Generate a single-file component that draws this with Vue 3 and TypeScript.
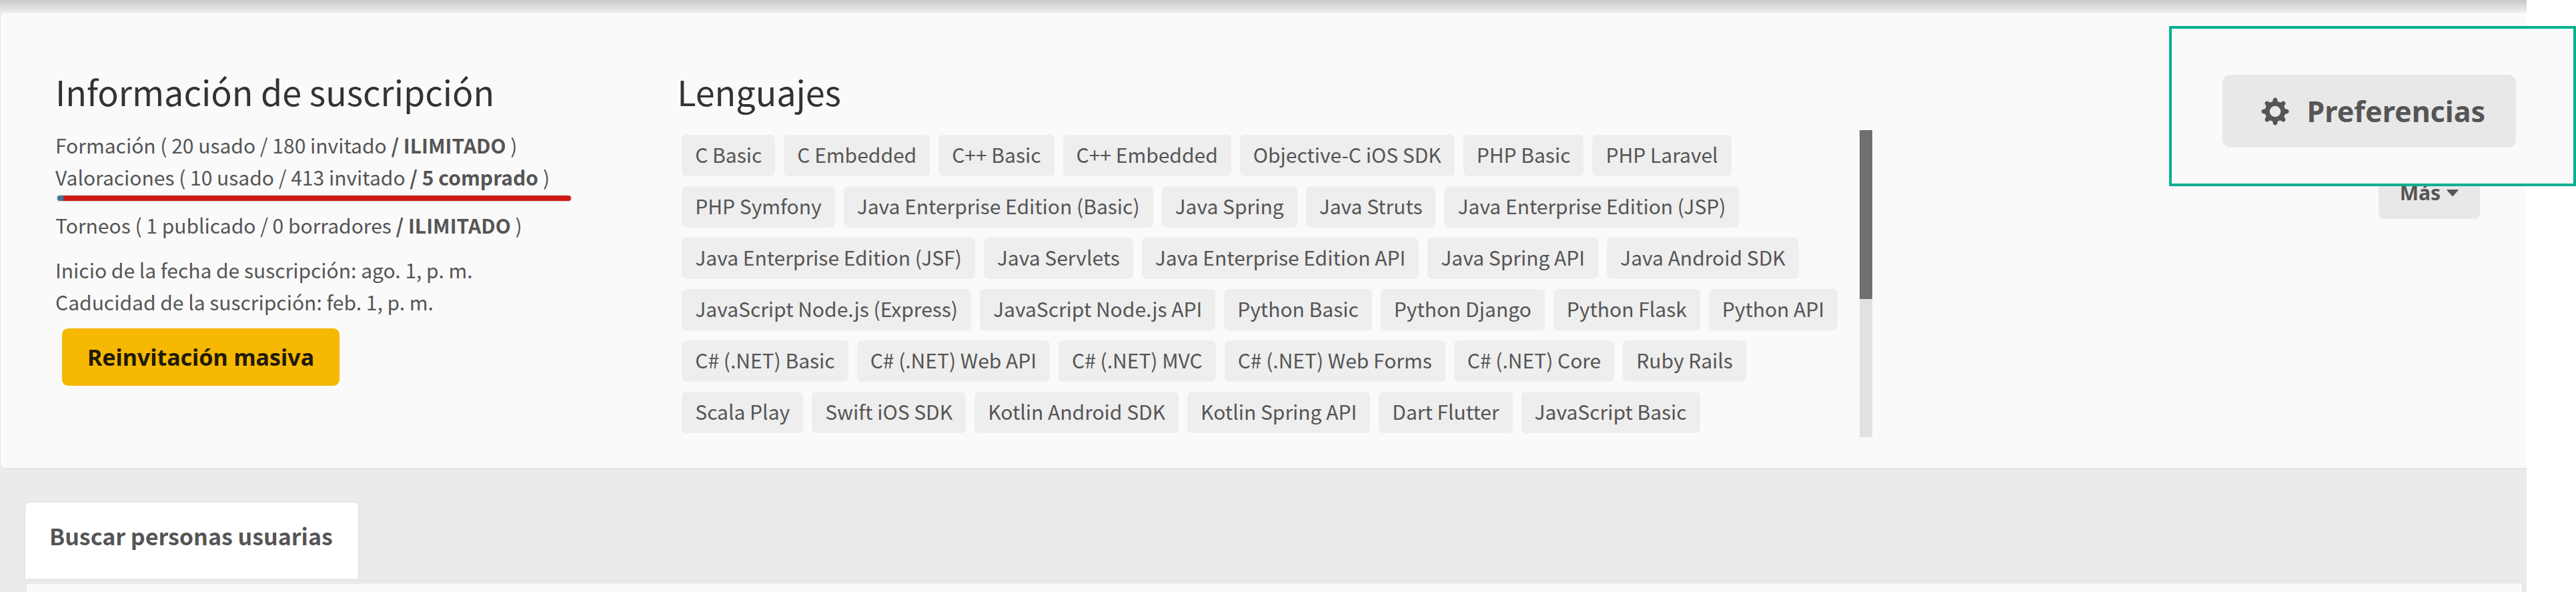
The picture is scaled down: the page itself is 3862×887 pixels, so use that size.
<script setup lang="ts">
interface Usage {
  label: string
  detail: string
  limit: string
}

const training: Usage = { label: 'Formación', detail: '20 usado / 180 invitado', limit: '/ ILIMITADO' }
const assessments: Usage = { label: 'Valoraciones', detail: '10 usado / 413 invitado', limit: '/ 5 comprado' }
const tournaments: Usage = { label: 'Torneos', detail: '1 publicado / 0 borradores', limit: '/ ILIMITADO' }

const languages: string[] = [
  'C Basic', 'C Embedded', 'C++ Basic', 'C++ Embedded', 'Objective-C iOS SDK', 'PHP Basic', 'PHP Laravel',
  'PHP Symfony', 'Java Enterprise Edition (Basic)', 'Java Spring', 'Java Struts', 'Java Enterprise Edition (JSP)',
  'Java Enterprise Edition (JSF)', 'Java Servlets', 'Java Enterprise Edition API', 'Java Spring API', 'Java Android SDK',
  'JavaScript Node.js (Express)', 'JavaScript Node.js API', 'Python Basic', 'Python Django', 'Python Flask', 'Python API',
  'C# (.NET) Basic', 'C# (.NET) Web API', 'C# (.NET) MVC', 'C# (.NET) Web Forms', 'C# (.NET) Core', 'Ruby Rails',
  'Scala Play', 'Swift iOS SDK', 'Kotlin Android SDK', 'Kotlin Spring API', 'Dart Flutter', 'JavaScript Basic',
]

const toothAngles: number[] = [0, 45, 90, 135, 180, 225, 270, 315]
</script>

<template>
  <div class="page">
    <div class="top-shadow"></div>
    <main class="panel">
      <section class="info">
        <h2>Información de suscripción</h2>
        <p>{{ training.label }} ( {{ training.detail }} <b>{{ training.limit }}</b> )</p>
        <p>{{ assessments.label }} ( {{ assessments.detail }} <b>{{ assessments.limit }}</b> )</p>
        <div class="usage-bar"><span class="usage-used"></span></div>
        <p>{{ tournaments.label }} ( {{ tournaments.detail }} <b>{{ tournaments.limit }}</b> )</p>
        <div class="dates">
          <p>Inicio de la fecha de suscripción: ago. 1, p. m.</p>
          <p>Caducidad de la suscripción: feb. 1, p. m.</p>
        </div>
        <button type="button" class="reinvite">Reinvitación masiva</button>
      </section>
      <section class="languages">
        <h2>Lenguajes</h2>
        <div class="list">
          <ul class="chips">
            <li v-for="name in languages" :key="name">{{ name }}</li>
          </ul>
          <div class="track"><div class="thumb"></div></div>
        </div>
      </section>
      <div class="actions">
        <button type="button" class="more">
          Más
          <svg width="18" height="10" viewBox="0 0 18 10" aria-hidden="true"><path d="M1 0h16q1 0 .5 1L10 9.400q-1 .8-2 0L.5 1Q0 0 1 0z" fill="#555" /></svg>
        </button>
      </div>
    </main>
    <nav class="tabs">
      <button type="button" class="tab">Buscar personas usuarias</button>
    </nav>
    <div class="results"></div>
    <div class="callout">
      <button type="button" class="preferences">
        <svg width="42" height="42" viewBox="0 0 42 42" aria-hidden="true">
          <circle cx="21" cy="21" r="11.800" fill="none" stroke="#555" stroke-width="7" />
          <path
            v-for="angle in toothAngles"
            :key="angle"
            fill="#555"
            d="M15.500 8.500Q17.500 6.500 17.800 3.500Q18.200 .5 21 .5T24.200 3.500Q24.500 6.500 26.500 8.500L24 11H18Z"
            :transform="`rotate(${angle} 21 21)`"
          />
        </svg>
        Preferencias
      </button>
    </div>
  </div>
</template>

<style>
body {
  margin: 0;
  background: #fff;
}
</style>

<style scoped>
.page {
  position: relative;
  display: flex;
  flex-direction: column;
  min-height: 100vh;
  box-sizing: border-box;
  border-right: 74px solid #fff;
  background: #ebebeb;
  color: #555;
  font-family: "Noto Sans CJK SC", "Noto Sans", sans-serif;
  font-size: 30px;
  line-height: 48px;
}

.top-shadow {
  height: 13px;
  border-bottom: 2px solid #e2e2e2;
  background: linear-gradient(#c9c9c9, #e4e4e4);
}

.panel {
  display: grid;
  grid-template-columns: 932fr 1791fr 911fr;
  margin-top: 4px;
  padding: 78px 70px 46px 82px;
  border: solid #e6e6e6;
  border-width: 0 0 2px 1px;
  border-radius: 8px 0 0 8px;
  background: #fafafa;
}

h2 {
  margin: 0;
  color: #333;
  font-size: 52px;
  font-weight: 400;
  line-height: 80px;
}

p {
  margin: 0;
}

.info p {
  white-space: nowrap;
}

.info h2 {
  margin-bottom: 16px;
}

b {
  font-weight: 700;
}

.usage-bar {
  display: flex;
  width: 770px;
  height: 8px;
  margin: 4px 0 12px 3px;
  border-radius: 4px;
  overflow: hidden;
  background: #cc1912;
  box-shadow: 0 0 0 2px #eaeaea;
}

.usage-used {
  width: 9px;
  background: #3979a0;
}

.dates {
  margin: 19px 0 16px;
}

button {
  border: 0;
  color: #555;
  font-family: "Noto Sans", "Open Sans", sans-serif;
  font-weight: 700;
  white-space: nowrap;
}

.reinvite {
  display: block;
  margin-left: 10px;
  padding: 20px 38px;
  border-radius: 9px;
  background: #f6b800;
  color: #1f1a08;
  font-size: 34px;
  line-height: 46px;
}

.list {
  display: flex;
  justify-content: space-between;
  margin-top: 18px;
}

.chips {
  display: flex;
  flex: 1;
  flex-wrap: wrap;
  align-content: flex-start;
  gap: 15px 13px;
  margin: 0;
  padding: 7px 24px 6px 7px;
  list-style: none;
}

.chips li {
  padding: 5px 20px 9px;
  border-radius: 7px;
  background: #eee;
  white-space: nowrap;
}

.track {
  width: 19px;
  background: #e1e1e1;
}

.thumb {
  height: 55%;
  background: #6f6f6f;
}

.actions {
  display: flex;
  align-items: flex-start;
  justify-content: flex-end;
  padding-top: 149px;
}

.more {
  display: flex;
  align-items: center;
  gap: 9px;
  padding: 20px 32px 16px;
  border-radius: 9px;
  background: #e8e8e8;
  font-size: 30px;
  line-height: 46px;
}

.tabs {
  display: flex;
  margin: 48px 37px 2px 36px;
}

.tab {
  padding: 26px 38px 40px 36px;
  border: 2px solid #e6e6e6;
  border-bottom: 0;
  border-radius: 9px 9px 0 0;
  background: #fff;
  font-family: "Noto Sans CJK SC", "Noto Sans", sans-serif;
  font-size: 34px;
  font-weight: 700;
  line-height: 48px;
}

.results {
  flex: 1;
  margin: 0 5px 0 38px;
  border: 2px solid #e6e6e6;
  border-bottom: 0;
  border-radius: 10px 10px 0 0;
  background: linear-gradient(#ebebeb 4px, #fafafa 4px);
}

.callout {
  position: absolute;
  top: 39px;
  right: -74px;
  display: flex;
  padding: 69px 86px 54px 76px;
  border: 4px solid #05b090;
  background: #fafafa;
}

.preferences {
  display: flex;
  align-items: center;
  gap: 27px;
  padding: 25px 46px 24px 58px;
  border-radius: 12px;
  background: #e8e8e8;
  font-size: 43px;
  line-height: 60px;
}
</style>
